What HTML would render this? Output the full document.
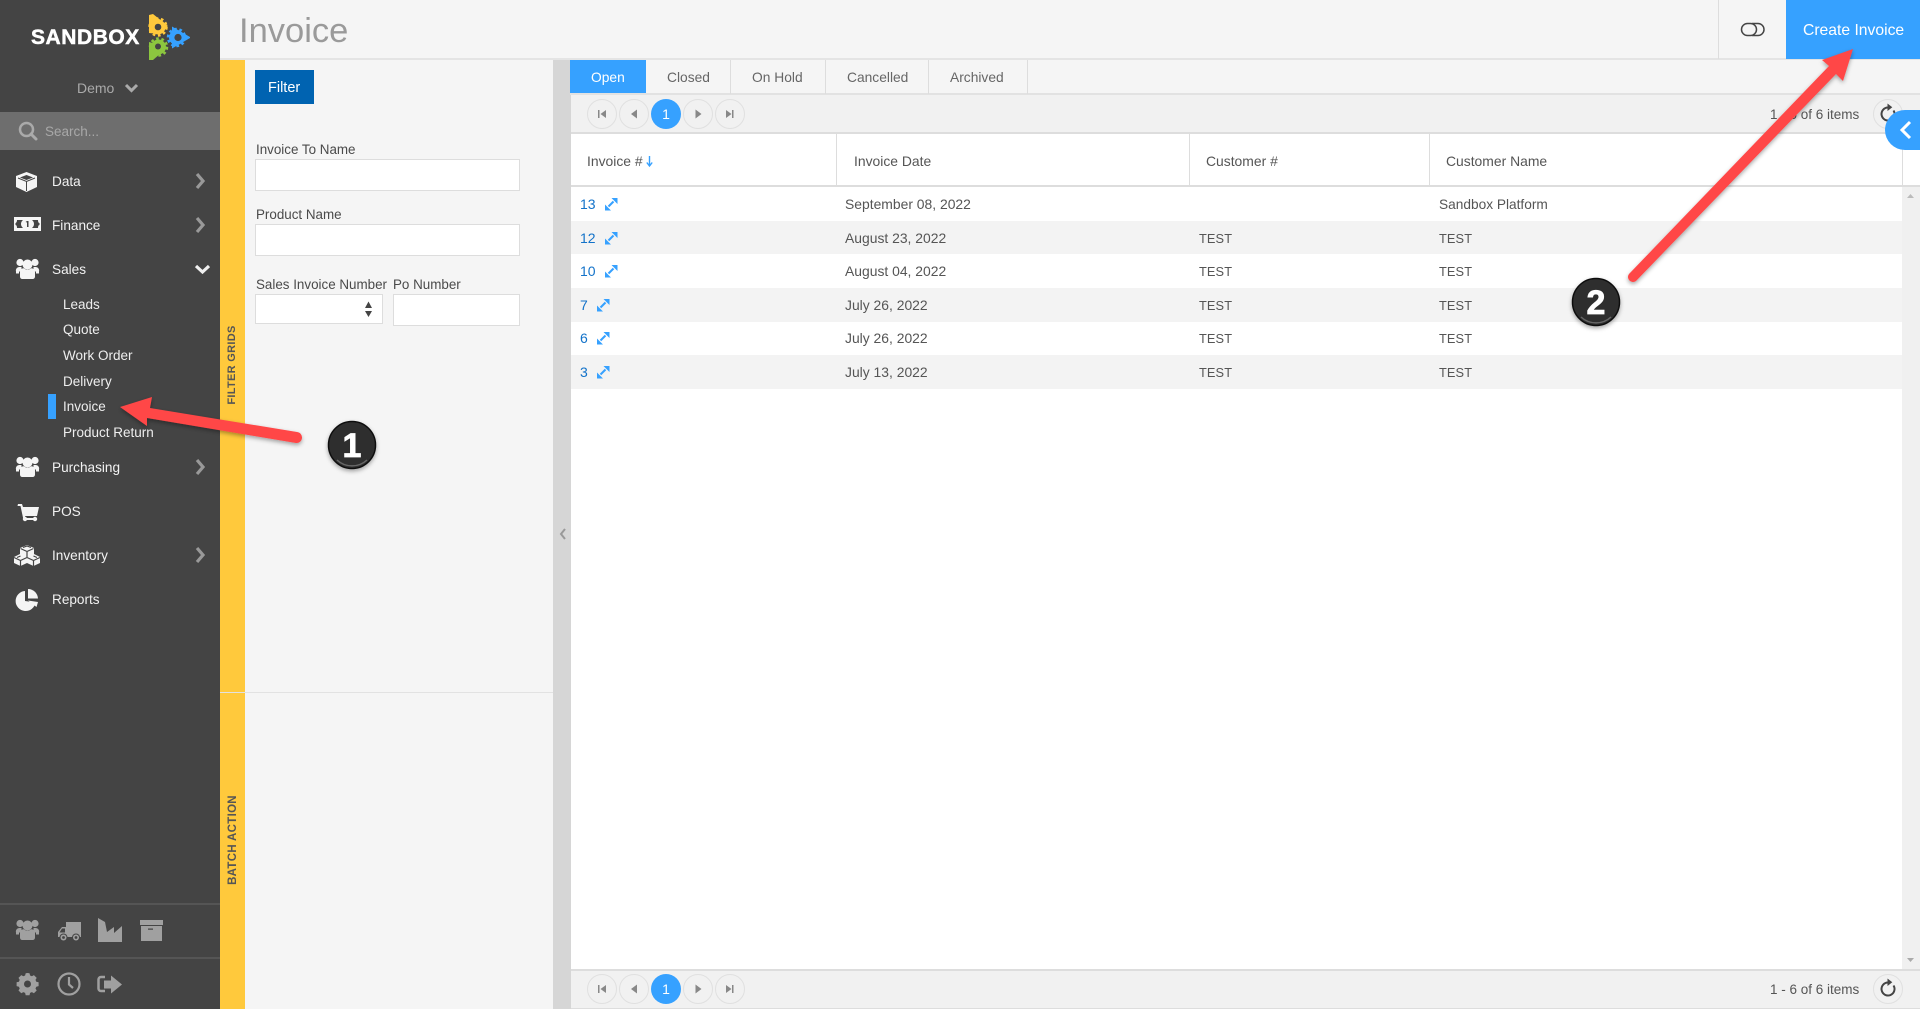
<!DOCTYPE html>
<html><head><meta charset="utf-8"><title>Invoice</title>
<style>
html,body{margin:0;padding:0;width:1920px;height:1009px;overflow:hidden;background:#fff;font-family:"Liberation Sans",sans-serif;}
div{position:absolute;box-sizing:border-box}
.t{white-space:nowrap;line-height:20px;height:20px;font-size:14px;color:#555}
.m{color:#f2f2f2;left:52px;font-size:13.6px;margin-top:1px}
.s{color:#eee;left:63px;font-size:13.5px;margin-top:1px}
.l{color:#4a4a4a;left:256px;font-size:13.4px;margin-top:1px}
.i{background:#fff;border:1px solid #ddd}
.h{color:#555;top:151px;font-size:13.9px}
.n{color:#1272c9}
.d{color:#555;font-size:13.9px}
.x{font-size:12.8px;letter-spacing:.1px;margin-top:1px}
.tab{top:68px;color:#666;font-size:13.8px}
.v{top:60px;width:1px;height:34px;background:#ddd}
.r{left:571px;width:1331px;background:#f3f3f3}
svg{position:absolute;left:0;top:0}
</style></head><body>
<div style="left:0;top:0;width:220px;height:1009px;background:#444"></div>
<div style="left:0;top:112px;width:220px;height:38px;background:#6e6e6e"></div>
<div style="left:0;top:903px;width:220px;height:2px;background:#555"></div>
<div style="left:0;top:957px;width:220px;height:2px;background:#555"></div>
<div style="left:48px;top:394px;width:8px;height:25px;background:#36a1ff"></div>

<div class="t" style="left:31px;top:26px;font-size:21px;line-height:24px;height:24px;font-weight:bold;color:#fff;letter-spacing:.55px;-webkit-text-stroke:.5px #fff">SANDBOX</div>
<div class="t" style="left:77px;top:78px;color:#aaa">Demo</div>
<div class="t" style="left:45px;top:122px;color:#a8a8a8;font-size:13.5px">Search...</div>
<div class="t m" style="top:171px">Data</div>
<div class="t m" style="top:215px">Finance</div>
<div class="t m" style="top:259px">Sales</div>
<div class="t s" style="top:294px">Leads</div>
<div class="t s" style="top:319px">Quote</div>
<div class="t s" style="top:345px">Work Order</div>
<div class="t s" style="top:371px">Delivery</div>
<div class="t s" style="top:396px">Invoice</div>
<div class="t s" style="top:422px">Product Return</div>
<div class="t m" style="top:457px">Purchasing</div>
<div class="t m" style="top:501px">POS</div>
<div class="t m" style="top:545px">Inventory</div>
<div class="t m" style="top:589px">Reports</div>

<div style="left:220px;top:0;width:1700px;height:60px;background:#f5f5f5;border-bottom:2px solid #e4e4e4"></div>
<div class="t" style="left:239px;top:9px;font-size:34.5px;line-height:44px;height:44px;color:#9a9a9a;font-weight:normal">Invoice</div>
<div style="left:1718px;top:0;width:1px;height:59px;background:#ddd"></div>
<div style="left:1786px;top:0;width:134px;height:59px;background:#36a1ff"></div>
<div class="t" style="left:1803px;top:21px;color:#fff;font-size:15.7px">Create Invoice</div>

<div style="left:220px;top:60px;width:25px;height:949px;background:#ffc93c"></div>
<div style="left:245px;top:60px;width:308px;height:949px;background:#f5f5f5"></div>
<div style="left:220px;top:692px;width:333px;height:1px;background:#e2e2e2"></div>
<div style="left:553px;top:60px;width:18px;height:949px;background:#d6d6d6"></div>
<div class="t" style="left:182px;top:355px;width:100px;text-align:center;font-size:11px;letter-spacing:.3px;font-weight:bold;color:#555;transform:rotate(-90deg)">FILTER GRIDS</div>
<div class="t" style="left:173px;top:830px;width:120px;text-align:center;font-size:11.5px;letter-spacing:.3px;font-weight:bold;color:#555;transform:rotate(-90deg)">BATCH ACTION</div>

<div style="left:255px;top:70px;width:59px;height:34px;background:#0063b1"></div>
<div class="t" style="left:268px;top:78px;color:#fff;font-size:14.5px">Filter</div>
<div class="t l" style="top:139px">Invoice To Name</div>
<div class="i" style="left:255px;top:159px;width:265px;height:32px"></div>
<div class="t l" style="top:204px">Product Name</div>
<div class="i" style="left:255px;top:224px;width:265px;height:32px"></div>
<div class="t l" style="top:274px">Sales Invoice Number</div>
<div class="t l" style="top:274px;left:393px">Po Number</div>
<div class="i" style="left:255px;top:294px;width:128px;height:30px"></div>
<div class="i" style="left:393px;top:294px;width:127px;height:32px"></div>

<div style="left:571px;top:60px;width:1349px;height:34px;background:#f5f5f5"></div>
<div style="left:570px;top:60px;width:76px;height:34px;background:#36a1ff"></div>
<div style="left:570px;top:93px;width:1350px;height:2px;background:#e2e2e2"></div>
<div class="t tab" style="left:591px;color:#fff">Open</div>
<div class="t tab" style="left:667px">Closed</div>
<div class="v" style="left:730px"></div>
<div class="t tab" style="left:752px">On Hold</div>
<div class="v" style="left:825px"></div>
<div class="t tab" style="left:847px">Cancelled</div>
<div class="v" style="left:928px"></div>
<div class="t tab" style="left:950px">Archived</div>
<div class="v" style="left:1027px"></div>

<div style="left:571px;top:95px;width:1349px;height:39px;background:#f1f1f1;border-bottom:2px solid #ddd"></div>
<div style="left:571px;top:134px;width:1349px;height:53px;background:#fff;border-bottom:2px solid #ddd"></div>
<div style="left:836px;top:134px;width:1px;height:52px;background:#ddd"></div>
<div style="left:1189px;top:134px;width:1px;height:52px;background:#ddd"></div>
<div style="left:1429px;top:134px;width:1px;height:52px;background:#ddd"></div>
<div style="left:1902px;top:134px;width:1px;height:52px;background:#ddd"></div>
<div class="t h" style="left:587px">Invoice #</div>
<div class="t h" style="left:854px">Invoice Date</div>
<div class="t h" style="left:1206px">Customer #</div>
<div class="t h" style="left:1446px">Customer Name</div>

<div class="r" style="top:221px;height:33px"></div>
<div class="r" style="top:288px;height:34px"></div>
<div class="r" style="top:355px;height:34px"></div>
<div style="left:1902px;top:187px;width:18px;height:782px;background:#f0f0f0"></div>

<div class="t n" style="left:580px;top:194px">13</div>
<div class="t n" style="left:580px;top:228px">12</div>
<div class="t n" style="left:580px;top:261px">10</div>
<div class="t n" style="left:580px;top:295px">7</div>
<div class="t n" style="left:580px;top:328px">6</div>
<div class="t n" style="left:580px;top:362px">3</div>
<div class="t d" style="left:845px;top:194px">September 08, 2022</div>
<div class="t d" style="left:845px;top:228px">August 23, 2022</div>
<div class="t d" style="left:845px;top:261px">August 04, 2022</div>
<div class="t d" style="left:845px;top:295px">July 26, 2022</div>
<div class="t d" style="left:845px;top:328px">July 26, 2022</div>
<div class="t d" style="left:845px;top:362px">July 13, 2022</div>
<div class="t d" style="left:1439px;top:195px;font-size:13.7px">Sandbox Platform</div>
<div class="t d x" style="left:1199px;top:228px">TEST</div><div class="t d x" style="left:1439px;top:228px">TEST</div>
<div class="t d x" style="left:1199px;top:261px">TEST</div><div class="t d x" style="left:1439px;top:261px">TEST</div>
<div class="t d x" style="left:1199px;top:295px">TEST</div><div class="t d x" style="left:1439px;top:295px">TEST</div>
<div class="t d x" style="left:1199px;top:328px">TEST</div><div class="t d x" style="left:1439px;top:328px">TEST</div>
<div class="t d x" style="left:1199px;top:362px">TEST</div><div class="t d x" style="left:1439px;top:362px">TEST</div>

<div style="left:571px;top:969px;width:1349px;height:40px;background:#f1f1f1;border-top:2px solid #ddd;border-bottom:1px solid #ddd"></div>
<div class="t d" style="left:1770px;top:105px;font-size:13.5px">1 - 6 of 6 items</div>
<div class="t d" style="left:1770px;top:980px;font-size:13.5px">1 - 6 of 6 items</div>

<svg width="1920" height="1009" viewBox="0 0 1920 1009" xmlns="http://www.w3.org/2000/svg">
<defs>
<filter id="sh" x="-20%" y="-20%" width="140%" height="140%"><feDropShadow dx="0" dy="2" stdDeviation="2" flood-color="#000" flood-opacity=".35"/></filter>
<g id="users">
<circle cx="-7.500" cy="-6.500" r="3.600"/><circle cx="7.500" cy="-6.500" r="3.600"/><circle cx="0" cy="-4.500" r="5"/>
<path d="M-11.500 2.500a3.500 3.500 0 0 1 3.500-4.500h2v4.500h-2.500v2h-3zM11.500 2.500a3.500 3.500 0 0 0-3.500-4.500h-2v4.500h2.500v2h3z"/>
<path d="M-7.500 7.500v-4.500c0-3 2.500-3.800 4-3.800 1 1 2.300 1.400 3.500 1.400s2.500-.4 3.500-1.400c1.500 0 4 .8 4 3.800v4.500c0 1.500-1 2.500-2.500 2.500h-10c-1.500 0-2.500-1-2.500-2.500z"/>
</g>
<g id="exp">
<path d="M3.500 8.500L8.500 3.500" stroke="#36a1ff" stroke-width="2" fill="none"/>
<path d="M0 12.500V6.500L6 12.500zM12.500 0V6L6.500 0z" fill="#36a1ff"/>
</g>
<g id="chev"><path d="M0 0l6 7-6 7" fill="none" stroke="#999" stroke-width="3.200"/></g>
<g id="pager">
<g fill="none" stroke="#e0e0e0" stroke-width="1">
<circle cx="602" cy="0" r="14.500"/><circle cx="634" cy="0" r="14.500"/><circle cx="698" cy="0" r="14.500"/><circle cx="730" cy="0" r="14.500"/></g>
<circle cx="666" cy="0" r="15" fill="#36a1ff"/>
<text x="666" y="5" text-anchor="middle" font-family="Liberation Sans" font-size="14" fill="#fff">1</text>
<g fill="#888">
<path d="M598 -4h1.500v8h-1.500zM606 -4v8l-5.500-4z"/>
<path d="M637 -4.500v9l-6-4.500z"/>
<path d="M695.500 -4.500v9l6-4.500z"/>
<path d="M733.500 -4h-1.500v8h1.500zM726 -4v8l5.500-4z"/>
</g></g>
<g id="refresh"><circle r="14.500" fill="none" stroke="#e0e0e0"/>
<path d="M0 -6.500A6.500 6.500 0 1 0 5.500 -3.500" fill="none" stroke="#444" stroke-width="2"/><path d="M-.5 -10.500l4.800 3.800-4.800 3.700z" fill="#444"/></g>
<g id="gear"><circle r="7"/><circle r="8.500" fill="none" stroke-width="2.500" stroke-dasharray="2.670 2.670"/></g>
</defs>

<!-- logo -->
<g fill="#ffc93c" stroke="#ffc93c"><use href="#gear" x="158" y="27"/></g>
<path d="M149 15l4-1 15 12-9 8-10-1z" fill="#ffc93c"/><circle cx="158" cy="27" r="3.300" fill="#444"/>
<g fill="#36a1ff" stroke="#36a1ff"><use href="#gear" x="176.500" y="37.500"/></g>
<path d="M172 26.500l18 10.500v1l-18 10.500z" fill="#36a1ff"/><circle cx="178" cy="37.500" r="3.600" fill="#444"/>
<g fill="#8cc63f" stroke="#8cc63f"><use href="#gear" x="158.500" y="47"/></g>
<path d="M149 42l19 5-15 13h-4z" fill="#8cc63f"/><circle cx="158" cy="46.500" r="3" fill="#444"/>

<!-- demo chevron + search -->
<path d="M126 85l5.500 5.500 5.500-5.500" fill="none" stroke="#aaa" stroke-width="3"/>
<circle cx="26.500" cy="129.500" r="6.500" fill="none" stroke="#aaa" stroke-width="2.500"/><path d="M31 134l5 5" stroke="#aaa" stroke-width="3" stroke-linecap="round"/>

<!-- sidebar icons -->
<g fill="#f5f5f5">
<path fill-rule="evenodd" d="M26.500 172l10.500 4v11l-10.500 5-10.500-5v-11zM26.500 175l-6.500 2.500 6.500 2.500 6.500-2.500z"/>
<path d="M26.500 181v10M18 178l8.500 3.500 8.500-3.500" fill="none" stroke="#444" stroke-width="1"/>
<path fill-rule="evenodd" d="M14 217h27v14h-27zM17 220c0 2-1 3-1.500 3v2c1 0 1.500 1 1.500 3h21c0-2 .5-3 1.500-3v-2c-1 0-1.500-1-1.500-3z"/>
<ellipse cx="27.500" cy="224" rx="6.500" ry="5.500"/>
<path d="M27 221h1.500v6h-1.500zM25.500 222l1.500-1v1.500z" fill="#444"/>
<use href="#users" x="27.500" y="269"/>
<use href="#users" x="27.500" y="467"/>
<path d="M18 504h4l1 3h16l-2 9h-12l.5 2h11v2h-13l-3-14h-3z"/><circle cx="25" cy="519" r="2.200"/><circle cx="35" cy="519" r="2.200"/>
<path d="M27 545l7 3v6l6 3v6l-6.500 3-6.500-3-6.500 3-6.500-3v-6l6-3v-6z"/>
<path d="M27 552v5M20.500 548.500l6.500 3 6.500-3M14 557.500l6.500 3 6.500-3 6.500 3 6.500-3M20.500 560.500v6M33.500 560.500v6M23 547.500l4 -1.500 4 1.500M17 557.500l3.500-1.500M37 557.500l-3.500-1.500" fill="none" stroke="#444" stroke-width="1.200"/>
<path d="M25 591a10 10 0 1 0 10.500 11.500l-10.500-1.500z"/><path d="M28 589v9.500h10a10 10 0 0 0-10-9.500z"/><path d="M28 600.500l10 1.500-1.500 5z"/>
</g>
<use href="#chev" x="197" y="174"/><use href="#chev" x="197" y="218"/><use href="#chev" x="197" y="460"/><use href="#chev" x="197" y="548"/>
<path d="M196 266l6.500 6 6.500-6" fill="none" stroke="#f0f0f0" stroke-width="3.200"/>

<!-- bottom icons -->
<g fill="#a0a0a0">
<use href="#users" x="27.500" y="930" />
<path d="M66 922h15v15H58v-5l4-5h4z"/>
<path d="M98 918l7 4 2 10 7-5v6l8-7v16h-24z"/>
<path fill-rule="evenodd" d="M140 920h23v5h-23zM141 926h21v15h-21zM148 928.500v1.200h5v-1.200z"/>
<path d="M27.500 974l2 .2.600 2.300 1.800.8 2-1.200 2.800 2.800-1.200 2 .8 1.800 2.300.6v3.800l-2.300.6-.8 1.800 1.200 2-2.800 2.800-2-1.200-1.800.8-.6 2.300h-3.800l-.6-2.300-1.800-.8-2 1.200-2.800-2.800 1.200-2-.8-1.800-2.300-.6v-3.800l2.300-.6.8-1.800-1.200-2 2.800-2.800 2 1.200 1.800-.8.6-2.300z" transform="translate(0 -1)"/>
</g>
<path d="M62 928.500h3v4h-5.500z" fill="#444"/>
<circle cx="63.500" cy="937.500" r="4" fill="#444"/><circle cx="76" cy="937.500" r="4" fill="#444"/>
<circle cx="63.500" cy="937.500" r="3" fill="#a0a0a0"/><circle cx="76" cy="937.500" r="3" fill="#a0a0a0"/>
<circle cx="63.500" cy="937.500" r="1.400" fill="#444"/><circle cx="76" cy="937.500" r="1.400" fill="#444"/>
<circle cx="27.500" cy="984" r="3.500" fill="#444"/>
<circle cx="69" cy="984" r="10.500" fill="none" stroke="#a0a0a0" stroke-width="2.200"/><path d="M69 977v7.500l4 3.500" fill="none" stroke="#a0a0a0" stroke-width="2.200"/>
<path d="M105 977h-4a2.500 2.500 0 0 0-2.500 2.500v9a2.500 2.500 0 0 0 2.500 2.500h4" fill="none" stroke="#a0a0a0" stroke-width="2.500"/><path d="M104 980.500h7v-5l11 9-11 9v-5h-7z" fill="#a0a0a0"/>

<!-- select arrows + sort -->
<path d="M365 308l3.500-6.500 3.500 6.500zM365 311l3.500 6 3.500-6z" fill="#444"/>
<path d="M649.500 156v10M646.800 162.500l2.700 3.500 2.700-3.500" fill="none" stroke="#36a1ff" stroke-width="1.400"/>

<!-- expand icons -->
<use href="#exp" x="605" y="198"/><use href="#exp" x="605" y="232"/><use href="#exp" x="605" y="265"/>
<use href="#exp" x="597" y="299"/><use href="#exp" x="597" y="332"/><use href="#exp" x="597" y="366"/>

<!-- pagers -->
<use href="#pager" y="114"/><use href="#pager" y="989"/>
<use href="#refresh" x="1888" y="114"/><use href="#refresh" x="1888" y="989"/>

<!-- splitter arrow + scrollbar arrows -->
<path d="M565 529l-4 5 4 5" fill="none" stroke="#999" stroke-width="2"/>
<path d="M1907 198l3.500-4 3.500 4z" fill="#bbb"/><path d="M1907 958l3.500 4 3.500-4z" fill="#aaa"/>

<!-- toggle -->
<rect x="1741.500" y="23.500" width="15" height="12" rx="6" fill="none" stroke="#444" stroke-width="1.500"/>
<path d="M1752 23.500h6a6 6 0 0 1 0 12h-6" fill="none" stroke="#444" stroke-width="1.500"/>

<!-- blue side tab -->
<path d="M1920 110h-15a20 20 0 0 0 0 40h15z" fill="#36a1ff"/>
<path d="M1910 122l-8 8 8 8" fill="none" stroke="#fff" stroke-width="3"/>

<!-- annotation arrows -->
<g filter="url(#sh)" fill="#ff4646">
<path d="M120 407L152 397 150 408 297 432a5.500 5.500 0 0 1 -1 11L147 418 147 426z"/>
<path d="M1853 49L1843 81 1836 74 1636 281a5 5 0 0 1 -7 -7L1829 66 1822 60z"/>
</g>
<g filter="url(#sh)">
<circle cx="352" cy="445" r="23.500" fill="#2f2f2f" stroke="#111" stroke-width="1.500"/>
<circle cx="1596" cy="302" r="23.500" fill="#2f2f2f" stroke="#111" stroke-width="1.500"/>
</g>
<path d="M337 460a22 22 0 0 0 30 0" fill="none" stroke="#666" stroke-width="1.500"/>
<path d="M1581 317a22 22 0 0 0 30 0" fill="none" stroke="#666" stroke-width="1.500"/>
<text x="352" y="457" text-anchor="middle" font-family="Liberation Sans" font-weight="bold" font-size="34" fill="#fff" stroke="#fff" stroke-width=".8">1</text>
<text x="1596" y="314" text-anchor="middle" font-family="Liberation Sans" font-weight="bold" font-size="34" fill="#fff" stroke="#fff" stroke-width=".8">2</text>
</svg>
</body></html>
